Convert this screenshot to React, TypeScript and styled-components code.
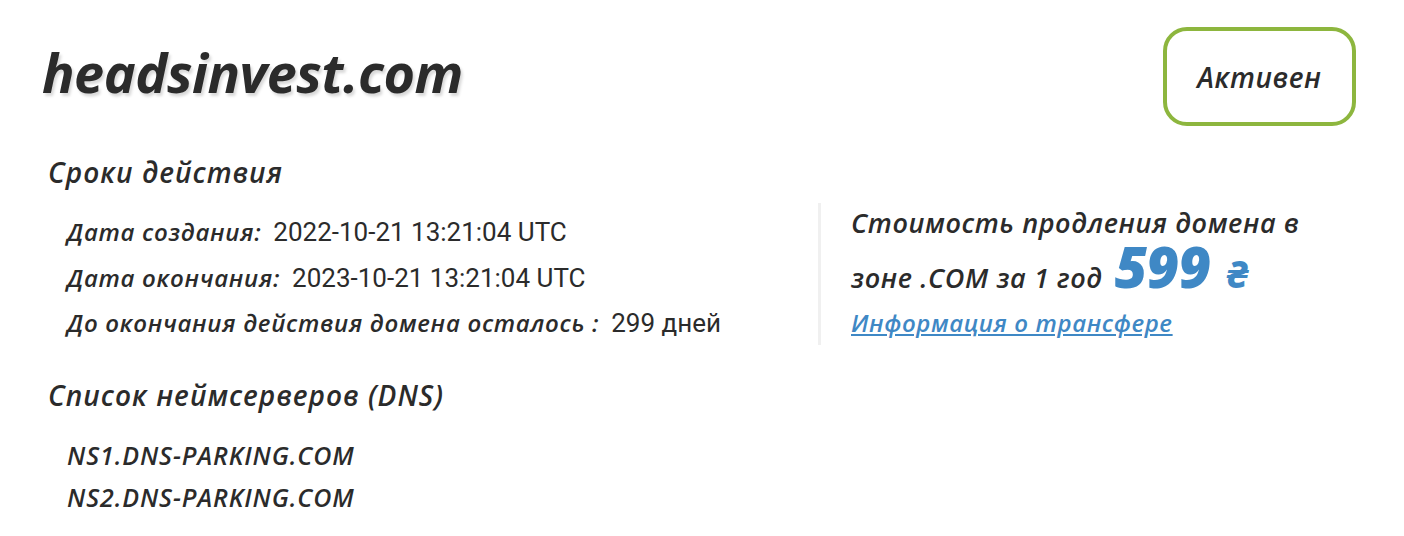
import React from "react";
import styled, { createGlobalStyle } from "styled-components";

const GlobalStyle = createGlobalStyle`
  html, body {
    margin: 0;
    padding: 0;
    background: #ffffff;
  }
  body {
    font-family: "Open Sans", "Noto Sans", sans-serif;
    color: #2b2b2b;
  }
`;

const Page = styled.div`
  width: 1404px;
  height: 536px;
  box-sizing: border-box;
  padding: 26px 48px 0 42px;
`;

const Header = styled.div`
  display: flex;
  justify-content: space-between;
  align-items: flex-start;
`;

const DomainTitle = styled.h1`
  margin: 16px 0 0;
  font-style: italic;
  font-weight: 700;
  font-size: 54px;
  line-height: 60px;
  letter-spacing: -0.5px;
  color: #2b2b2b;
  text-shadow: 2px 3px 3px #d9d9d9;
`;

const StatusBadge = styled.div`
  box-sizing: border-box;
  width: 193px;
  height: 99px;
  margin-top: 1px;
  border: 4px solid #8db63e;
  border-radius: 24px;
  display: flex;
  align-items: center;
  justify-content: center;
  font-style: italic;
  font-weight: 600;
  font-size: 28px;
  letter-spacing: 0.6px;
  color: #2b2b2b;
`;

const Body = styled.div`
  display: grid;
  grid-template-columns: 776px 1fr;
  margin-top: 28px;
`;

const SectionTitle = styled.h2`
  margin: 0 0 0 6px;
  font-style: italic;
  font-weight: 600;
  font-size: 28px;
  line-height: 36px;
  letter-spacing: 1px;
  color: #2b2b2b;
`;

const InfoList = styled.div`
  display: flex;
  flex-direction: column;
  gap: 9.5px;
  margin: 24px 0 0 25px;
`;

const InfoRow = styled.div`
  display: flex;
  align-items: baseline;
  line-height: 36px;
`;

const Label = styled.span`
  font-style: italic;
  font-weight: 600;
  font-size: 24px;
  letter-spacing: 0.7px;
  margin-right: 12px;
`;

const Value = styled.span`
  font-family: Roboto, sans-serif;
  font-weight: 400;
  font-size: 26px;
`;

const PriceBox = styled.div`
  align-self: start;
  margin-top: 49px;
  border-left: 3px solid #f0f0f0;
  padding: 0 0 4px 30px;
`;

const PriceText = styled.div`
  margin-top: -8px;
  font-style: italic;
  font-weight: 600;
  font-size: 27px;
  line-height: 55px;
  letter-spacing: 0.6px;
  width: 470px;
`;

const Price = styled.span`
  color: #3f88c5;
  font-weight: 800;
  font-size: 56px;
  line-height: 0;
  letter-spacing: -0.5px;
  margin-left: 12px;
`;

const Currency = styled.span`
  color: #3f88c5;
  font-weight: 800;
  font-size: 38px;
  line-height: 0;
  margin-left: 16px;
`;

const TransferLink = styled.a`
  display: inline-block;
  color: #3f88c5;
  font-style: italic;
  font-weight: 600;
  font-size: 24px;
  line-height: 36px;
  letter-spacing: 0.6px;
  text-decoration: underline;
`;

const DnsSection = styled.div`
  margin-top: 36px;
`;

const NsList = styled.div`
  display: flex;
  flex-direction: column;
  gap: 8px;
  margin: 25px 0 0 25px;
`;

const NsItem = styled.div`
  font-style: italic;
  font-weight: 600;
  font-size: 25px;
  line-height: 34px;
  letter-spacing: 0.9px;
`;

const dates = [
  { label: "Дата создания:", value: "2022-10-21 13:21:04 UTC" },
  { label: "Дата окончания:", value: "2023-10-21 13:21:04 UTC" },
  { label: "До окончания действия домена осталось :", value: "299 дней" },
];

const nameservers = ["NS1.DNS-PARKING.COM", "NS2.DNS-PARKING.COM"];

export default function App() {
  return (
    <Page>
      <GlobalStyle />
      <Header>
        <DomainTitle>headsinvest.com</DomainTitle>
        <StatusBadge>Активен</StatusBadge>
      </Header>
      <Body>
        <div>
          <SectionTitle>Сроки действия</SectionTitle>
          <InfoList>
            {dates.map((d) => (
              <InfoRow key={d.label}>
                <Label>{d.label}</Label>
                <Value>{d.value}</Value>
              </InfoRow>
            ))}
          </InfoList>
          <DnsSection>
            <SectionTitle>Список неймсерверов (DNS)</SectionTitle>
            <NsList>
              {nameservers.map((ns) => (
                <NsItem key={ns}>{ns}</NsItem>
              ))}
            </NsList>
          </DnsSection>
        </div>
        <PriceBox>
          <PriceText>
            Стоимость продления домена в зоне .COM за 1 год
            <Price>599</Price>
            <Currency>₴</Currency>
          </PriceText>
          <TransferLink href="#">Информация о трансфере</TransferLink>
        </PriceBox>
      </Body>
    </Page>
  );
}
